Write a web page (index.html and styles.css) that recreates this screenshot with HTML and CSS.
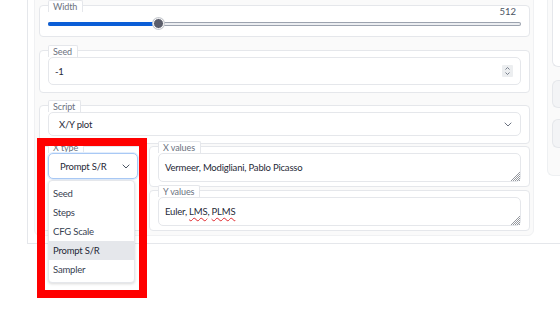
FILE: index.html
```html
<!DOCTYPE html>
<html lang="en">
<head>
    <meta charset="UTF-8">
    <meta name="viewport" content="width=device-width, initial-scale=1.0">
    <title>X/Y plot script</title>
    <link rel="stylesheet" href="styles.css">
</head>
<body>
    <div class="outer">
        <div class="panel">
            <div class="block block-width">
                <div class="slider-head">
                    <span class="label">Width</span>
                    <span class="value">512</span>
                </div>
                <div class="track">
                    <div class="fill" style="width: 23.4%"></div>
                    <div class="thumb" style="left: 23.4%"></div>
                </div>
            </div>

            <div class="block block-seed">
                <span class="label">Seed</span>
                <div class="field">
                    <span>-1</span>
                    <span class="spinner">
                        <svg width="11" height="12" viewBox="0 0 11 12">
                            <path d="M3.5 4.5 L5.5 2.5 L7.5 4.5" fill="none" stroke="#6b7280" stroke-width="0.9"/>
                            <path d="M3.5 7.5 L5.5 9.5 L7.5 7.5" fill="none" stroke="#6b7280" stroke-width="0.9"/>
                        </svg>
                    </span>
                </div>
            </div>

            <div class="block block-script">
                <span class="label">Script</span>
                <div class="field select">
                    <span>X/Y plot</span>
                    <svg class="chevron" width="8" height="5" viewBox="0 0 8 5">
                        <path d="M0.7 0.7 L4 4 L7.3 0.7" fill="none" stroke="#6b7280" stroke-width="1"/>
                    </svg>
                </div>
            </div>

            <div class="row">
                <div class="block block-xtype">
                    <span class="label">X type</span>
                    <div class="dropdown">
                        <div class="field select focused">
                            <span>Prompt S/R</span>
                            <svg class="chevron" width="8" height="5" viewBox="0 0 8 5">
                                <path d="M0.7 0.7 L4 4 L7.3 0.7" fill="none" stroke="#4b5563" stroke-width="1"/>
                            </svg>
                        </div>
                        <ul class="options">
                            <li>Seed</li>
                            <li>Steps</li>
                            <li>CFG Scale</li>
                            <li class="active">Prompt S/R</li>
                            <li>Sampler</li>
                        </ul>
                    </div>
                </div>

                <div class="xy">
                    <div class="block block-values">
                        <span class="label">X values</span>
                        <div class="area">
                            <span>Vermeer, Modigliani, Pablo Picasso</span>
                            <svg class="grip" width="10" height="10" viewBox="0 0 10 10">
                                <path d="M10 1 L1 10 M10 3 L3 10 M10 5 L5 10 M10 7 L7 10 M10 9 L9 10" stroke="#7b7f87" stroke-width="0.8"/>
                            </svg>
                        </div>
                    </div>
                    <div class="block block-values">
                        <span class="label">Y values</span>
                        <div class="area">
                            <span>Euler, <span class="typo">LMS</span>, <span class="typo">PLMS</span></span>
                            <svg class="grip" width="10" height="10" viewBox="0 0 10 10">
                                <path d="M10 1 L1 10 M10 3 L3 10 M10 5 L5 10 M10 7 L7 10 M10 9 L9 10" stroke="#7b7f87" stroke-width="0.8"/>
                            </svg>
                        </div>
                    </div>
                </div>
            </div>
        </div>

        <div class="side">
            <div class="side-card"></div>
            <div class="side-btn first"></div>
            <div class="side-btn"></div>
        </div>
    </div>

    <div class="highlight"></div>
</body>
</html>
```

FILE: styles.css
```css
body {
    margin: 0;
    width: 560px;
    height: 315px;
    overflow: hidden;
    background-color: #fff;
    font-family: Lato, "Noto Sans", sans-serif;
    color: #374151;
    position: relative;
}
.outer {
    display: flex;
    gap: 13px;
    margin: -20px 0 0 27px;
    height: 264px;
    box-sizing: border-box;
    padding-left: 6px;
    border-left: 1px solid #e5e7eb;
    border-bottom: 1px solid #e5e7eb;
}
.panel {
    flex: 0 0 500px;
    box-sizing: border-box;
    align-self: flex-start;
    background-color: #fafafa;
    border: 1px solid #f0f1f3;
    border-radius: 0 0 6px 6px;
    padding: 24px 3px 4px 4px;
}
.block {
    display: flex;
    flex-direction: column;
    background-color: #fff;
    border: 1px solid #e5e7eb;
    border-radius: 4px;
    padding: 0 8px 7px;
}
.label {
    align-self: flex-start;
    margin-top: -6px;
    height: 11px;
    line-height: 11px;
    padding: 0 5px 0 4px;
    border: 1px solid #e5e7eb;
    border-bottom: 0;
    border-radius: 2px 2px 0 0;
    background-color: #fff;
    font-size: 9px;
    letter-spacing: -0.1px;
    color: #6b7280;
}
.block-width {
    padding-bottom: 10px;
}
.slider-head {
    display: flex;
    justify-content: space-between;
    align-items: flex-start;
}
.value {
    line-height: 12px;
    font-size: 9.5px;
    color: #4b5563;
    padding-right: 5px;
}
.track {
    position: relative;
    display: flex;
    height: 4px;
    margin-top: 4px;
    border-radius: 2px;
    background-color: #eceef1;
    box-shadow: inset 0 0 0 1px #9ca3af;
}
.fill {
    height: 100%;
    border-radius: 2px 0 0 2px;
    background-color: #0b5ed7;
}
.thumb {
    position: absolute;
    top: -4px;
    width: 9px;
    height: 9px;
    margin-left: -6px;
    border: 1.5px solid #fff;
    border-radius: 50%;
    background-color: #5b5e6b;
    box-shadow: 0 0 0 1px #c8cbd0;
}
.block-seed {
    margin-top: 13px;
}
.block-script {
    margin-top: 12px;
}
.field {
    display: flex;
    align-items: center;
    justify-content: space-between;
    box-sizing: border-box;
    height: 28px;
    padding: 0 7px 0 6px;
    border: 1px solid #e5e7eb;
    border-radius: 5px;
    background-color: #fff;
    font-size: 9.5px;
    letter-spacing: -0.2px;
    color: #1f2937;
}
.spinner {
    display: flex;
    background-color: #eceef0;
    border-radius: 1px;
}
.select {
    height: 24px;
    padding: 0 8px 0 10px;
}
.row {
    display: flex;
    gap: 4px;
    margin-top: 2px;
}
.block-xtype {
    flex: 0 0 106px;
    box-sizing: border-box;
    padding: 0 6px 0 8px;
}
.dropdown {
    position: relative;
}
.focused {
    height: 26px;
    padding: 0 7px 0 11px;
    border-color: #a9c9f5;
    box-shadow: 0 0 0 1px #e3eefc;
}
.options {
    position: absolute;
    top: 27px;
    left: 0;
    width: 87px;
    box-sizing: border-box;
    margin: 0;
    padding: 3px 0;
    list-style: none;
    background-color: #fff;
    border: 1px solid #e5e7eb;
    border-radius: 4px;
    box-shadow: 0 1px 3px rgba(0, 0, 0, 0.15);
    font-size: 9.5px;
    letter-spacing: -0.2px;
    color: #374151;
}
.options li {
    height: 19px;
    line-height: 19px;
    padding-left: 4px;
}
.options li.active {
    background-color: #e5e7eb;
    color: #1f2937;
}
.xy {
    flex: 1;
    display: flex;
    flex-direction: column;
    gap: 3px;
}
.block-values {
    padding-bottom: 4px;
}
.area {
    position: relative;
    display: flex;
    align-items: center;
    box-sizing: border-box;
    height: 29px;
    padding: 0 6px;
    border: 1px solid #e5e7eb;
    border-radius: 5px;
    font-size: 9.5px;
    letter-spacing: -0.2px;
    color: #1f2937;
}
.grip {
    position: absolute;
    right: 0;
    bottom: 0;
}
.typo {
    text-decoration: underline wavy #e0282e;
    text-decoration-thickness: 1px;
    text-decoration-skip-ink: none;
    text-underline-offset: 2px;
}
/* right column, only its left edge is in view */
.side {
    flex: 0 0 13px;
    box-sizing: border-box;
    align-self: flex-start;
    background-color: #fafafa;
    border: 1px solid #eef0f2;
    border-right: 0;
    border-radius: 0 0 0 6px;
    padding: 4px 0 27px 4px;
}
.side-card {
    height: 80px;
    background-color: #fff;
    border: 1px solid #e5e7eb;
    border-right: 0;
    border-radius: 0 0 0 6px;
}
.side-btn {
    height: 27px;
    margin-top: 11px;
    background-color: #f3f4f6;
    border: 1px solid #e5e7eb;
    border-right: 0;
    border-radius: 6px 0 0 6px;
}
.side-btn.first {
    height: 26px;
    margin-top: 13px;
}
.highlight {
    position: absolute;
    left: 37px;
    top: 138px;
    width: 110px;
    height: 160px;
    box-sizing: border-box;
    border: 8.5px solid #ff0000;
}
```
